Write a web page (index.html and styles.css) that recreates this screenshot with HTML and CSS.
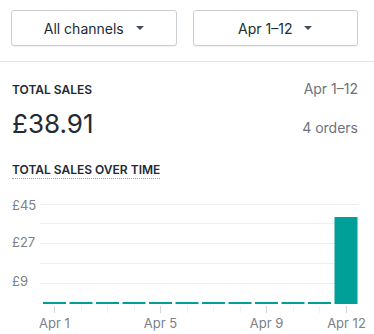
FILE: index.html
```html
<!DOCTYPE html>
<html lang="en">
<head>
    <meta charset="UTF-8">
    <meta name="viewport" content="width=device-width, initial-scale=1.0">
    <title>Total sales</title>
    <link rel="stylesheet" href="styles.css">
</head>
<body>
    <div class="filters">
        <button class="select">All channels
            <svg class="caret" width="8" height="4" viewBox="0 0 8 4"><path d="M0 0h8L4 4z"/></svg>
        </button>
        <button class="select">Apr 1–12
            <svg class="caret" width="8" height="4" viewBox="0 0 8 4"><path d="M0 0h8L4 4z"/></svg>
        </button>
    </div>

    <section class="report">
        <div class="row">
            <h2 class="label">Total sales</h2>
            <span class="muted">Apr 1–12</span>
        </div>
        <div class="row">
            <p class="amount">£38.91</p>
            <span class="muted">4 orders</span>
        </div>
        <h3 class="label chart-title">Total sales over time</h3>

        <svg class="chart" width="374" height="154" viewBox="0 180 374 154">
            <g class="grid">
                <line x1="40" x2="358" y1="203.5" y2="203.5"/>
                <line x1="40" x2="358" y1="222.5" y2="222.5"/>
                <line x1="40" x2="358" y1="242.5" y2="242.5"/>
                <line x1="40" x2="358" y1="262.5" y2="262.5"/>
                <line x1="40" x2="358" y1="282.5" y2="282.5"/>
            </g>
            <g class="axis-y">
                <text x="12" y="209">£45</text>
                <text x="12" y="246">£27</text>
                <text x="12" y="285">£9</text>
            </g>
            <g class="bars">
                <rect x="43" y="301" width="23" height="2"/>
                <rect x="69.5" y="301" width="23" height="2"/>
                <rect x="96" y="301" width="23" height="2"/>
                <rect x="122.5" y="301" width="23" height="2"/>
                <rect x="149" y="301" width="23" height="2"/>
                <rect x="175.5" y="301" width="23" height="2"/>
                <rect x="202" y="301" width="23" height="2"/>
                <rect x="228.5" y="301" width="23" height="2"/>
                <rect x="255" y="301" width="23" height="2"/>
                <rect x="281.5" y="301" width="23" height="2"/>
                <rect x="308" y="301" width="23" height="2"/>
                <rect x="334.5" y="216" width="23" height="87"/>
            </g>
            <g class="ticks">
                <line class="major" x1="54.5" x2="54.5" y1="305" y2="312"/>
                <line x1="81.5" x2="81.5" y1="305" y2="312"/>
                <line x1="107.5" x2="107.5" y1="305" y2="312"/>
                <line x1="134.5" x2="134.5" y1="305" y2="312"/>
                <line class="major" x1="160.5" x2="160.5" y1="305" y2="312"/>
                <line x1="187.5" x2="187.5" y1="305" y2="312"/>
                <line x1="213.5" x2="213.5" y1="305" y2="312"/>
                <line x1="240.5" x2="240.5" y1="305" y2="312"/>
                <line class="major" x1="266.5" x2="266.5" y1="305" y2="312"/>
                <line x1="293.5" x2="293.5" y1="305" y2="312"/>
                <line x1="319.5" x2="319.5" y1="305" y2="312"/>
                <line class="major" x1="346.5" x2="346.5" y1="305" y2="312"/>
            </g>
            <g class="axis-x">
                <text x="54.5" y="327">Apr 1</text>
                <text x="160.5" y="327">Apr 5</text>
                <text x="266.5" y="327">Apr 9</text>
                <text x="346.5" y="327">Apr 12</text>
            </g>
        </svg>
    </section>
</body>
</html>
```

FILE: styles.css
```css
body {
    margin: 0;
    background-color: #fff;
    font-family: Inter, "Noto Sans", sans-serif;
    color: #212b36;
}
.filters {
    display: flex;
    gap: 16px;
    padding: 10px 16px 15px 11px;
    border-bottom: 1px solid #e3e6e9;
}
.select {
    flex: 1;
    height: 36px;
    display: flex;
    align-items: center;
    justify-content: center;
    gap: 12px;
    background-color: #fff;
    border: 1px solid #c9ced3;
    border-radius: 3px;
    box-shadow: 0 1px 0 rgba(22, 29, 37, 0.05);
    font-family: inherit;
    font-size: 14px;
    color: #212b36;
    padding: 0 8px;
}
.caret {
    fill: #454f5b;
}
.report {
    padding: 18px 16px 0 12px;
}
.row {
    display: flex;
    justify-content: space-between;
    align-items: baseline;
}
.row + .row {
    margin-top: 10px;
}
.label {
    margin: 0;
    font-size: 12px;
    line-height: 16px;
    font-weight: 600;
    text-transform: uppercase;
}
.muted {
    font-size: 14px;
    color: #6b737b;
}
.amount {
    margin: 0;
    font-size: 26px;
    line-height: 32px;
}
.chart-title {
    width: fit-content;
    margin-top: 22px;
    border-bottom: 1px dotted #9aa3ab;
}
.chart {
    display: block;
    margin-top: 2px;
    margin-left: -12px;
}
.grid line {
    stroke: #eceef0;
    stroke-width: 1;
}
.bars rect {
    fill: #00a098;
}
.ticks line {
    stroke: #f0f1f2;
    stroke-width: 1;
}
.ticks line.major {
    stroke: #d3d7db;
}
.chart text {
    font-family: Inter, "Noto Sans", sans-serif;
    font-size: 13px;
    fill: #7a8188;
}
.axis-x text {
    text-anchor: middle;
}
```
